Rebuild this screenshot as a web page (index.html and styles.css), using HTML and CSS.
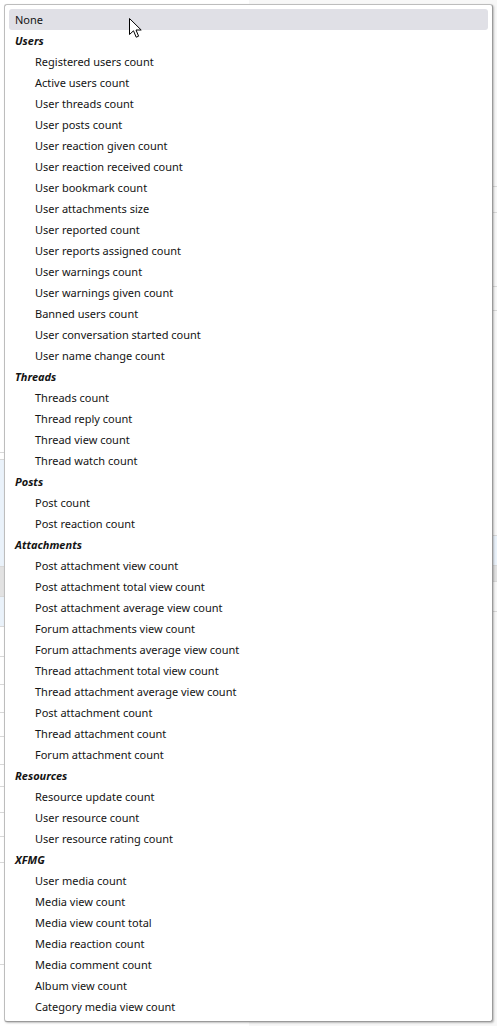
FILE: index.html
```html
<!DOCTYPE html>
<html lang="en">
<head>
    <meta charset="UTF-8">
    <meta name="viewport" content="width=device-width, initial-scale=1.0">
    <title>Criteria select</title>
    <link rel="stylesheet" href="styles.css">
</head>
<body>
    <!-- page behind the open list -->
    <div class="page">
        <div class="page-col left">
            <div class="row" style="height: 453px"></div>
            <div class="row" style="height: 7px"></div>
            <div class="row tint" style="height: 107px"></div>
            <div class="row grey" style="height: 30px"></div>
            <div class="row tint" style="height: 30px"></div>
            <div class="row" style="height: 30px"></div>
            <div class="row" style="height: 28px"></div>
            <div class="row" style="height: 28px"></div>
            <div class="row" style="height: 24px"></div>
            <div class="row" style="height: 28px"></div>
            <div class="row" style="height: 22px"></div>
            <div class="row" style="height: 26px"></div>
            <div class="row" style="height: 24px"></div>
            <div class="row" style="height: 26px"></div>
            <div class="row" style="height: 102px"></div>
        </div>
        <div class="page-col right">
            <div class="row" style="height: 187px"></div>
            <div class="row" style="height: 26px"></div>
            <div class="row" style="height: 74px"></div>
            <div class="row" style="height: 24px"></div>
            <div class="row" style="height: 225px"></div>
            <div class="row tint" style="height: 30px"></div>
            <div class="row grey" style="height: 16px"></div>
            <div class="row" style="height: 30px"></div>
        </div>
    </div>

    <!-- open select list -->
    <div class="dropdown">
        <div class="option selected">None</div>

        <div class="group">Users</div>
        <div class="option child">Registered users count</div>
        <div class="option child">Active users count</div>
        <div class="option child">User threads count</div>
        <div class="option child">User posts count</div>
        <div class="option child">User reaction given count</div>
        <div class="option child">User reaction received count</div>
        <div class="option child">User bookmark count</div>
        <div class="option child">User attachments size</div>
        <div class="option child">User reported count</div>
        <div class="option child">User reports assigned count</div>
        <div class="option child">User warnings count</div>
        <div class="option child">User warnings given count</div>
        <div class="option child">Banned users count</div>
        <div class="option child">User conversation started count</div>
        <div class="option child">User name change count</div>

        <div class="group">Threads</div>
        <div class="option child">Threads count</div>
        <div class="option child">Thread reply count</div>
        <div class="option child">Thread view count</div>
        <div class="option child">Thread watch count</div>

        <div class="group">Posts</div>
        <div class="option child">Post count</div>
        <div class="option child">Post reaction count</div>

        <div class="group">Attachments</div>
        <div class="option child">Post attachment view count</div>
        <div class="option child">Post attachment total view count</div>
        <div class="option child">Post attachment average view count</div>
        <div class="option child">Forum attachments view count</div>
        <div class="option child">Forum attachments average view count</div>
        <div class="option child">Thread attachment total view count</div>
        <div class="option child">Thread attachment average view count</div>
        <div class="option child">Post attachment count</div>
        <div class="option child">Thread attachment count</div>
        <div class="option child">Forum attachment count</div>

        <div class="group">Resources</div>
        <div class="option child">Resource update count</div>
        <div class="option child">User resource count</div>
        <div class="option child">User resource rating count</div>

        <div class="group">XFMG</div>
        <div class="option child">User media count</div>
        <div class="option child">Media view count</div>
        <div class="option child">Media view count total</div>
        <div class="option child">Media reaction count</div>
        <div class="option child">Media comment count</div>
        <div class="option child">Album view count</div>
        <div class="option child">Category media view count</div>
    </div>

    <!-- mouse pointer -->
    <svg class="cursor" width="14" height="22" viewBox="0 0 14 22">
        <path d="M0.5 0.5 L0.5 16.5 L4.5 12.8 L7.2 19.2 L9.6 18.2 L7 12 L12.2 12 Z"
              fill="#fff" stroke="#000" stroke-width="1" stroke-linejoin="miter"/>
    </svg>
</body>
</html>
```

FILE: styles.css
```css
body {
    margin: 0;
    padding: 0;
    background-color: #fff;
    font-family: "Noto Sans", "Open Sans", sans-serif;
    font-size: 11px;
    color: #141414;
    position: relative;
    height: 1026px;
    overflow: hidden;
}

.page {
    display: flex;
    height: 1026px;
}

.page-col {
    flex: 1;
}

.page-col.right {
    background-color: #f7f7f7;
}

.row {
    border-bottom: 1px solid #d8d8d8;
    box-sizing: border-box;
}

.row.tint {
    background-color: #eaf2fa;
}

.row.grey {
    background-color: #e2e2e2;
}

.dropdown {
    position: absolute;
    top: 4px;
    left: 4px;
    width: 489px;
    box-sizing: border-box;
    padding: 4px 4px;
    background-color: #fff;
    border: 1px solid #bdbdbd;
    border-right-color: #9a9a9a;
    border-bottom-color: #9a9a9a;
    border-radius: 3px;
    box-shadow: 1px 1px 2px rgba(0, 0, 0, 0.25);
}

.option,
.group {
    height: 21px;
    line-height: 22px;
    white-space: nowrap;
}

.option {
    padding-left: 6px;
}

.option.child {
    padding-left: 26px;
}

.option.selected {
    background-color: #e0e0e6;
    border-radius: 3px;
}

.group {
    padding-left: 6px;
    font-weight: bold;
    font-style: italic;
}

.cursor {
    position: absolute;
    left: 129px;
    top: 18px;
}
```
